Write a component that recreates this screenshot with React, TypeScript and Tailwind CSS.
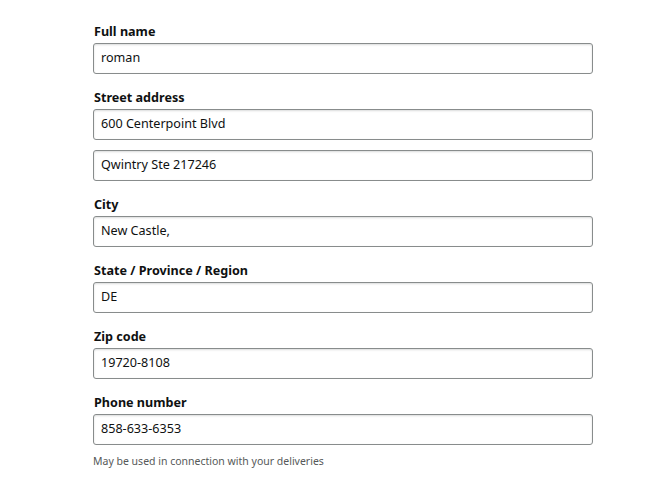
import React from "react";

function Field({ label, values }: { label: string; values: string[] }) {
  return (
    <div className="flex flex-col">
      <div className="text-[12.6px] leading-[19px] font-bold text-[#0f1111] mb-[2px] pl-[1px]">{label}</div>
      <div className="flex flex-col gap-[10px]">
        {values.map((v) => (
          <div
            key={v}
            className="h-[31px] w-[500px] border border-[#888c8c] rounded-[3px] shadow-[inset_0_1px_2px_rgba(15,17,17,0.15)] px-[7px] flex items-center text-[12.6px] text-[#0f1111]"
          >
            {v}
          </div>
        ))}
      </div>
    </div>
  );
}

export default function App() {
  return (
    <div
      className="w-[654px] h-[479px] bg-white pl-[93px] pt-[22px]"
      style={{ fontFamily: '"Noto Sans", "Open Sans", Arial, sans-serif' }}
    >
      <div className="flex flex-col gap-[14px]">
        <Field label="Full name" values={["roman"]} />
        <Field label="Street address" values={["600 Centerpoint Blvd", "Qwintry Ste 217246"]} />
        <Field label="City" values={["New Castle,"]} />
        <Field label="State / Province / Region" values={["DE"]} />
        <Field label="Zip code" values={["19720-8108"]} />
        <div className="flex flex-col">
          <Field label="Phone number" values={["858-633-6353"]} />
          <div className="text-[10.5px] leading-[16px] text-[#565959] mt-[8px]">
            May be used in connection with your deliveries
          </div>
        </div>
      </div>
    </div>
  );
}
